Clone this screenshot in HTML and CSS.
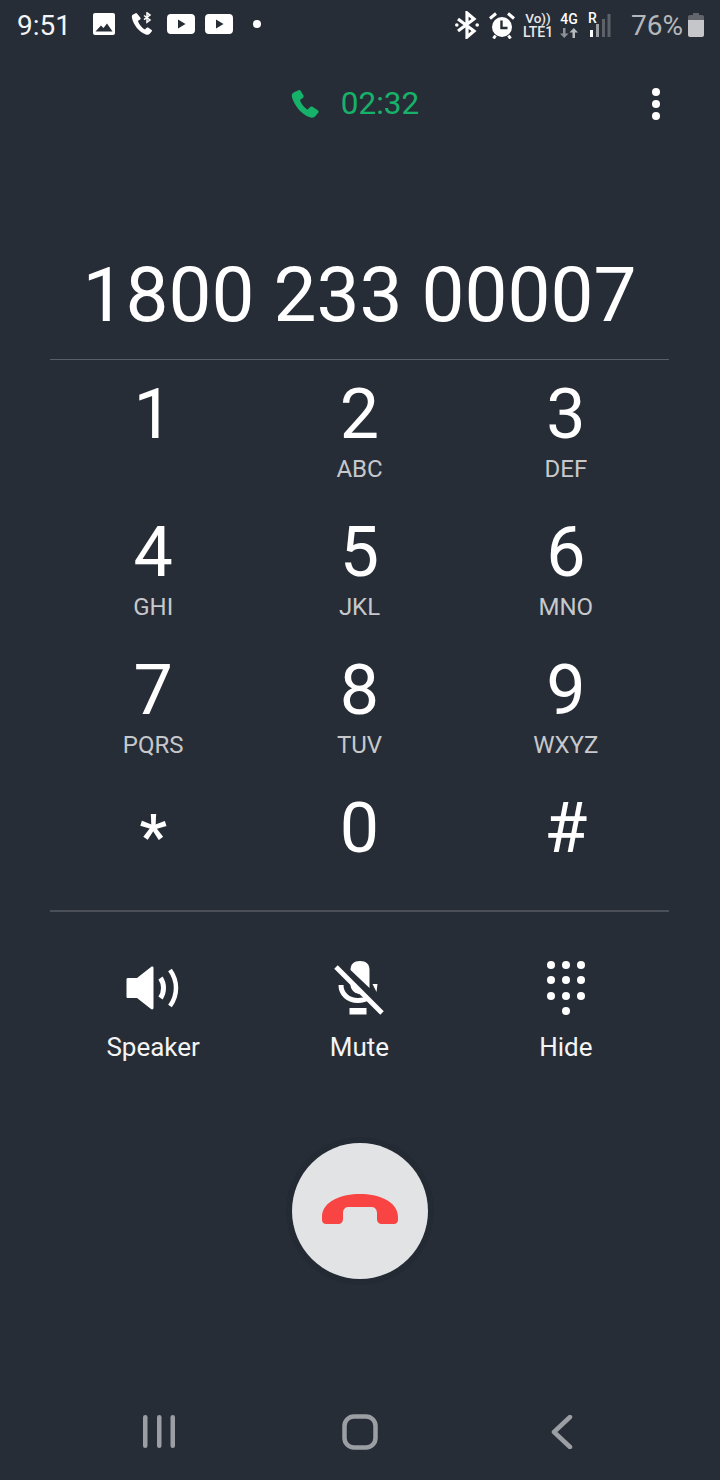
FILE: index.html
```html
<!DOCTYPE html>
<html lang="en">
<head>
<meta charset="utf-8">
<title>Call</title>
<link rel="stylesheet" href="styles.css">
</head>
<body>
<div class="screen">
  <header class="status">
    <span class="time">9:51</span>
    <svg class="ic s1" width="22" height="22" viewBox="0 0 22 22"><path fill="#fff" fill-rule="evenodd" d="M2 0h18a2 2 0 0 1 2 2v18a2 2 0 0 1-2 2H2a2 2 0 0 1-2-2V2a2 2 0 0 1 2-2zM2.500 18.500h17L14 10.500l-3.500 4.500-2.500-2.500z"/></svg>
    <svg class="ic s2" width="24" height="24" viewBox="0 0 24 24"><path fill="#fff" d="M4.600 1.200 1.700 2.800C.9 3.400.7 4.600 1 6c1.400 6.500 6.600 13.800 13.900 16.500 1.500.5 2.800.4 3.600-.5l2.200-2.400c.4-.5.4-1.100-.1-1.500l-3.500-2.500c-.5-.3-1-.3-1.400.1l-1.600 1.500c-.3.200-.6.200-.9 0-2.300-1.500-5.100-5-6.100-7.700-.1-.4 0-.7.300-.9l1.800-1.200c.4-.3.600-.8.400-1.300L6 1.600c-.3-.5-.9-.7-1.400-.4z"/><path fill="none" stroke="#fff" stroke-width="1.500" d="M13 3.500l6 4.500-3 2.300V.8l3 2.300-6 4.500"/></svg>
    <svg class="ic s3" width="28" height="20" viewBox="0 0 28 20"><path fill="#fff" fill-rule="evenodd" d="M4 0h20a4 4 0 0 1 4 4v12a4 4 0 0 1-4 4H4a4 4 0 0 1-4-4V4a4 4 0 0 1 4-4zM11 5.500v9l7.500-4.500z"/></svg>
    <svg class="ic s4" width="28" height="20" viewBox="0 0 28 20"><path fill="#fff" fill-rule="evenodd" d="M4 0h20a4 4 0 0 1 4 4v12a4 4 0 0 1-4 4H4a4 4 0 0 1-4-4V4a4 4 0 0 1 4-4zM11 5.500v9l7.500-4.500z"/></svg>
    <span class="dot"></span>
    <div class="right">
      <svg class="ic r1" width="24" height="28" viewBox="0 0 24 28"><path fill="none" stroke="#fff" stroke-width="3.200" d="M3 8l16 12-7 6V2l7 6L3 20"/><circle cx="1.800" cy="14" r="1.800" fill="#fff"/><circle cx="22.200" cy="14" r="1.800" fill="#fff"/></svg>
      <svg class="ic r2" width="26" height="27" viewBox="0 0 26 27"><circle cx="13" cy="15" r="10" fill="#fff"/><path fill="none" stroke="#272d37" stroke-width="2.400" d="M12.500 8.500v7.500h6"/><path fill="none" stroke="#fff" stroke-width="3" d="M1 6.500 7 1.500M25 6.500l-6-5M6.500 23.500l-2 3M19.500 23.500l2 3"/></svg>
      <div class="volte"><span class="vo">Vo))</span><span class="lte">LTE1</span></div>
      <div class="net"><span class="g4">4G</span>
        <svg width="18" height="10" viewBox="0 0 18 10"><path fill="#8d9096" d="M3 0h2.500v5.500H8.500L4.200 10 0 5.500h3z"/><path fill="#b7b9bc" d="M12.500 10H15V4.500h3L13.800 0 9.500 4.500h3z"/></svg>
      </div>
      <div class="sig"><span class="roam">R</span>
        <svg width="24" height="24" viewBox="0 0 24 24"><rect x="2" y="17" width="3" height="7" fill="#fff"/><rect x="8" y="11" width="3" height="13" fill="#9a9da1"/><rect x="14" y="6" width="3" height="18" fill="#5d6269"/><rect x="19.500" y="1" width="3" height="23" fill="#5d6269"/></svg>
      </div>
      <span class="pct">76%</span>
      <svg class="ic batt" width="16" height="24" viewBox="0 0 16 24"><path fill="#62666c" d="M5 0h6v2h3a2 2 0 0 1 2 2v4H0V4a2 2 0 0 1 2-2h3z"/><path fill="#c5c6c9" d="M0 7h16v15a2 2 0 0 1-2 2H2a2 2 0 0 1-2-2z"/></svg>
    </div>
  </header>

  <div class="callbar">
    <svg class="callic" width="30" height="30" viewBox="0 0 30 30"><path fill="#17b26a" d="M7.500 1.200 3 3.300C1 4.300.4 6 1 8.200c2.200 8 9.200 17 17.800 20.100 2.500.8 4.400.3 5.700-1.300l2.700-3.200c.7-.9.500-2-.4-2.600l-5.300-3.400c-.8-.5-1.700-.4-2.400.3l-1.900 2c-.4.400-.9.400-1.300.1-2.800-1.900-5.500-5.300-6.700-8.500-.2-.5 0-1 .4-1.300l2.200-1.500c.8-.6 1.100-1.500.7-2.400L9.900 2.200c-.5-1-1.500-1.400-2.400-1z"/></svg>
    <span class="timer">02:32</span>
    <div class="more"><i></i><i></i><i></i></div>
  </div>

  <div class="number">1800 233 00007</div>

  <main class="keypad">
    <div class="key"><b>1</b><span></span></div>
    <div class="key"><b>2</b><span>ABC</span></div>
    <div class="key"><b>3</b><span>DEF</span></div>
    <div class="key"><b>4</b><span>GHI</span></div>
    <div class="key"><b>5</b><span>JKL</span></div>
    <div class="key"><b>6</b><span>MNO</span></div>
    <div class="key"><b>7</b><span>PQRS</span></div>
    <div class="key"><b>8</b><span>TUV</span></div>
    <div class="key"><b>9</b><span>WXYZ</span></div>
    <div class="key"><b class="star">*</b><span></span></div>
    <div class="key"><b>0</b><span></span></div>
    <div class="key"><b>#</b><span></span></div>
  </main>

  <section class="actions">
    <div class="action">
      <svg width="56" height="56" viewBox="0 0 56 56"><path fill="#fff" d="M3 18h9L26 7c1-.8 2.500-.3 2.500 1v40c0 1.300-1.500 1.800-2.500 1L12 38H3c-1 0-1.500-.5-1.500-1.500v-17C1.500 18.500 2 18 3 18z"/><path fill="none" stroke="#fff" stroke-width="5" d="M35.500 18c4 6 4 14 0 20"/><path fill="none" stroke="#fff" stroke-width="4.500" d="M45 10c8 11 8 25 0 36"/></svg>
      <span>Speaker</span>
    </div>
    <div class="action">
      <svg width="56" height="56" viewBox="0 0 56 56"><path fill="#fff" d="M19.500 10C19.500 4 23 1 29 1c6 0 9.500 3 9.500 9v18z"/><path fill="#fff" d="M19.500 23 31 34c-6 1-11.500-4-11.500-9z"/><path fill="#fff" d="M41.500 24h5l-1 8z"/><path fill="none" stroke="#fff" stroke-width="5" d="M10 25c0 9 7 15.500 17 15.500 4 0 8-1 11-3"/><rect x="18.500" y="48" width="17" height="6.500" fill="#fff"/><path stroke="#fff" stroke-width="5" fill="none" d="M5 7l46 46"/></svg>
      <span>Mute</span>
    </div>
    <div class="action">
      <svg width="56" height="56" viewBox="0 0 56 56" fill="#fff"><circle cx="13" cy="5" r="4"/><circle cx="28" cy="5" r="4"/><circle cx="43" cy="5" r="4"/><circle cx="13" cy="20" r="4"/><circle cx="28" cy="20" r="4"/><circle cx="43" cy="20" r="4"/><circle cx="13" cy="36" r="4"/><circle cx="28" cy="36" r="4"/><circle cx="43" cy="36" r="4"/><circle cx="28" cy="51" r="4"/></svg>
      <span>Hide</span>
    </div>
  </section>

  <div class="endwrap">
    <div class="end">
      <svg width="78" height="32" viewBox="0 0 78 32"><path fill="#f94444" d="M39 1C21 1 1 8 1 24v3c0 2 1.500 4 4 4h12c3 0 5-2 5-5v-6c0-3 2-6 5-6h24c3 0 5 3 5 6v6c0 3 2 5 5 5h12c2.500 0 4-2 4-4v-3C77 8 57 1 39 1z"/></svg>
    </div>
  </div>

  <nav class="nav">
    <svg width="32" height="34" viewBox="0 0 32 34" fill="#9b9ea3"><rect x="0" y="0" width="4.500" height="33" rx="2.250"/><rect x="14" y="0" width="4.500" height="33" rx="2.250"/><rect x="27.500" y="0" width="4.500" height="33" rx="2.250"/></svg>
    <svg width="36" height="36" viewBox="0 0 36 36"><rect x="2.500" y="2.500" width="31" height="31" rx="9.500" fill="none" stroke="#9b9ea3" stroke-width="4.500"/></svg>
    <svg width="22" height="34" viewBox="0 0 22 34"><path d="M19 2 3 17l16 15" fill="none" stroke="#9b9ea3" stroke-width="4.500" stroke-linecap="round" stroke-linejoin="round"/></svg>
  </nav>
</div>
</body>
</html>
```
FILE: styles.css
```css
* { box-sizing: border-box; margin: 0; padding: 0; }
html, body { width: 720px; height: 1480px; overflow: hidden; }
body { background: #272d37; color: #fff; font-family: Roboto, "Liberation Sans", sans-serif; }
.screen { width: 720px; height: 1480px; display: flex; flex-direction: column; background: #272d37; }

.status { height: 48px; display: flex; align-items: center; padding: 0 16px 0 17px; }
.time { font-size: 28px; width: 76px; color: #f4f4f5; margin-top: 2px; }
.ic { display: block; flex: none; }
.s2 { margin-left: 16px; }
.s3 { margin-left: 12px; }
.s4 { margin-left: 10px; }
.dot { width: 8px; height: 8px; border-radius: 50%; background: #fff; margin-left: 20px; }
.right { margin-left: auto; margin-top: 2px; display: flex; align-items: center; }
.r2 { margin-left: 10px; }
.volte { display: flex; flex-direction: column; align-items: center; margin-left: 8px; line-height: 14px; font-weight: 500; color: #e8e8e9; width: 30px; }
.vo { font-size: 13.500px; }
.lte { font-size: 14px; }
.net { display: flex; flex-direction: column; align-items: center; margin-left: 7px; width: 18px; gap: 2px; }
.net svg { display: block; }
.g4 { font-size: 14px; font-weight: 500; line-height: 14px; }
.sig { position: relative; width: 24px; height: 24px; margin-left: 10px; }
.sig svg { display: block; }
.roam { position: absolute; left: 0; top: -1px; font-size: 14px; font-weight: 500; line-height: 12px; }
.pct { font-size: 28px; color: #b5b7ba; margin-left: 19px; }
.batt { margin-left: 5px; }

.callbar { position: relative; height: 112px; display: flex; align-items: flex-start; justify-content: center; gap: 20px; padding: 41px 10px 0 0; }
.callic { display: block; }
.timer { font-size: 31.500px; font-weight: 400; line-height: 30px; color: #17b26a; }
.more { position: absolute; right: 60px; top: 40px; display: flex; flex-direction: column; gap: 4px; }
.more i { display: block; width: 8px; height: 8px; border-radius: 50%; background: #fff; }

.number { margin: 0 51px 0 50px; height: 200px; border-bottom: 1px solid #5a5f67; font-size: 76.500px; font-weight: 400; line-height: 70px; text-align: center; padding-top: 100px; color: #fff; white-space: nowrap; }

.keypad { margin: 0 51px 0 50px; display: grid; grid-template-columns: repeat(3, 1fr); grid-auto-rows: 138px; height: 552px; border-bottom: 2px solid #4a4f58; }
.key { display: flex; flex-direction: column; align-items: center; padding-top: 16px; }
.key b { font-weight: 400; font-size: 70px; line-height: 76px; height: 76px; }
.key b.star { font-weight: 500; font-size: 62px; padding-top: 9px; }
.key span { font-size: 24px; line-height: 28px; margin-top: 3px; color: #c6c8cb; }

.actions { margin: 0 51px 0 50px; display: grid; grid-template-columns: repeat(3, 1fr); padding-top: 48px; height: 180px; }
.action { display: flex; flex-direction: column; align-items: center; }
.action svg { display: block; }
.action span { font-size: 26px; line-height: 32px; margin-top: 15px; color: #f4f4f5; }

.endwrap { display: flex; justify-content: center; padding-top: 51px; height: 322px; }
.end { width: 136px; height: 136px; border-radius: 50%; background: #e2e3e5; display: flex; align-items: center; justify-content: center; box-shadow: 0 0 0 6px #242a33; }
.end svg { display: block; margin-bottom: 5px; }

.nav { display: flex; align-items: center; height: 36px; padding-left: 143px; }
.nav svg { display: block; flex: none; }
.nav svg:nth-child(2) { margin-left: 167px; }
.nav svg:nth-child(3) { margin-left: 173px; }
```
